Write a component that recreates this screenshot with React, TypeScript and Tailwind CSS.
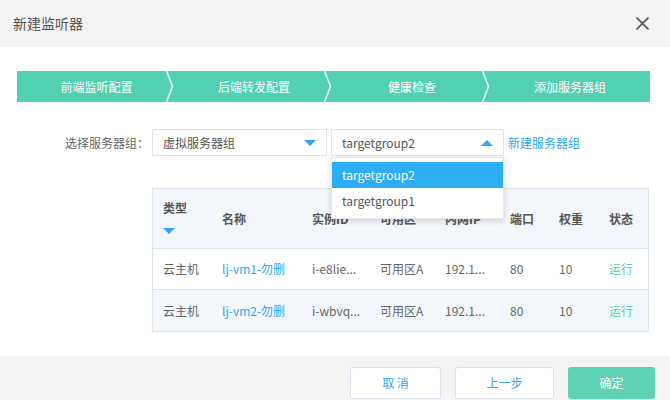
import React from 'react'

const steps = ['前端监听配置', '后端转发配置', '健康检查', '添加服务器组']

const rows = [
  { type: '云主机', name: 'lj-vm1-勿删', id: 'i-e8lie...', zone: '可用区A', ip: '192.1...', port: '80', weight: '10', status: '运行' },
  { type: '云主机', name: 'lj-vm2-勿删', id: 'i-wbvq...', zone: '可用区A', ip: '192.1...', port: '80', weight: '10', status: '运行' },
]

const cols = 'grid grid-cols-[59px_90px_68px_65px_65px_49px_50px_1fr]'

function Chevron() {
  return (
    <svg width="8" height="31" viewBox="0 0 8 31" className="shrink-0 bg-[#52d1b2]">
      <path d="M0.5 0 L6.5 15.5 L0.5 31" fill="none" stroke="#eafaf5" strokeWidth="1.6" />
    </svg>
  )
}

function Triangle({ up = false }: { up?: boolean }) {
  return (
    <svg width="12" height="6" viewBox="0 0 12 6">
      <path d={up ? 'M0 6 L6 0 L12 6 Z' : 'M0 0 L12 0 L6 6 Z'} fill="#2fa6f2" />
    </svg>
  )
}

export default function App() {
  return (
    <div className="w-[670px] h-[400px] overflow-hidden bg-white text-[12px] text-[#666] font-['Noto_Sans_CJK_SC','Noto_Sans',sans-serif]">
      {/* Header */}
      <div className="h-[47px] bg-[#f3f3f3] flex items-center justify-between pl-[13px] pr-[21px]">
        <span className="text-[14px] text-[#555]">新建监听器</span>
        <svg width="13" height="13" viewBox="0 0 13 13">
          <path d="M0.5 0.5 L12.5 12.5 M12.5 0.5 L0.5 12.5" stroke="#555" strokeWidth="1.6" />
        </svg>
      </div>

      <div className="pt-[24px] pl-[17px] pr-[20px]">
        {/* Steps */}
        <div className="flex h-[31px]">
          {steps.map((s, i) =>
            i < steps.length - 1 ? (
              <React.Fragment key={s}>
                <div className={`${i === 0 ? 'w-[149px]' : 'w-[150px]'} bg-[#52d1b2] flex items-center justify-center pl-[10px] text-white`}>
                  {s}
                </div>
                <Chevron />
              </React.Fragment>
            ) : (
              <div key={s} className="flex-1 bg-[#52d1b2] flex items-center justify-center text-white">
                {s}
              </div>
            ),
          )}
        </div>

        {/* Select row */}
        <div className="mt-[27px] flex items-center h-[27px]">
          <div className="w-[135px] text-right pr-[3px] text-[#666]">选择服务器组：</div>
          <div className="w-[175px] h-[27px] border border-[#e1e4e8] flex items-center justify-between pl-[10px] pr-[10px] text-[#555]">
            <span>虚拟服务器组</span>
            <Triangle />
          </div>
          <div className="relative ml-[4px] w-[173px] h-[27px]">
            <div className="h-full border border-[#e1e4e8] flex items-center justify-between pl-[10px] pr-[10px] text-[#555]">
              <span>targetgroup2</span>
              <Triangle up />
            </div>
            <div className="absolute z-10 left-0 top-[28px] w-full bg-white border border-[#e4e7eb] shadow-[0_2px_6px_rgba(0,0,0,0.15)] pt-[4px] pb-[4px]">
              <div className="h-[26px] flex items-center pl-[10px] bg-[#2eadf7] text-white">targetgroup2</div>
              <div className="h-[26px] flex items-center pl-[10px] text-[#555]">targetgroup1</div>
            </div>
          </div>
          <span className="ml-[4px] text-[#2fa6f2]">新建服务器组</span>
        </div>

        {/* Table */}
        <div className="mt-[32px] ml-[135px] w-[497px] border border-[#dde4ec]">
          <div className={`${cols} h-[60px] bg-[#f3f6fa] border-b border-[#dde4ec] font-bold text-[#555] pl-[10px]`}>
            <div className="flex flex-col items-start pt-[10px]">
              <span>类型</span>
              <div className="mt-[11px]">
                <Triangle />
              </div>
            </div>
            <div className="flex items-center">名称</div>
            <div className="flex items-center">实例ID</div>
            <div className="flex items-center">可用区</div>
            <div className="flex items-center">内网IP</div>
            <div className="flex items-center">端口</div>
            <div className="flex items-center">权重</div>
            <div className="flex items-center">状态</div>
          </div>
          {rows.map((r, i) => (
            <div
              key={r.name}
              className={`${cols} h-[41px] pl-[10px] items-center ${i === 0 ? 'bg-white border-b border-[#dde4ec]' : 'bg-[#f3f6fa]'}`}
            >
              <div>{r.type}</div>
              <div className="text-[#2fa6f2]">{r.name}</div>
              <div>{r.id}</div>
              <div>{r.zone}</div>
              <div>{r.ip}</div>
              <div>{r.port}</div>
              <div>{r.weight}</div>
              <div className="text-[#4fd1b0]">{r.status}</div>
            </div>
          ))}
        </div>
      </div>

      {/* Footer */}
      <div className="mt-[24px] h-[44px] bg-[#f3f3f3] flex justify-end items-start pt-[11px] pr-[15px] gap-[14px]">
        <button className="w-[91px] h-[32px] bg-white border border-[#d9e2ec] rounded-[3px] text-[#2fa6f2]">取 消</button>
        <button className="w-[99px] h-[32px] bg-white border border-[#d9e2ec] rounded-[3px] text-[#2fa6f2]">上一步</button>
        <button className="w-[87px] h-[32px] bg-[#5ed3b4] rounded-[3px] text-white">确定</button>
      </div>
    </div>
  )
}
